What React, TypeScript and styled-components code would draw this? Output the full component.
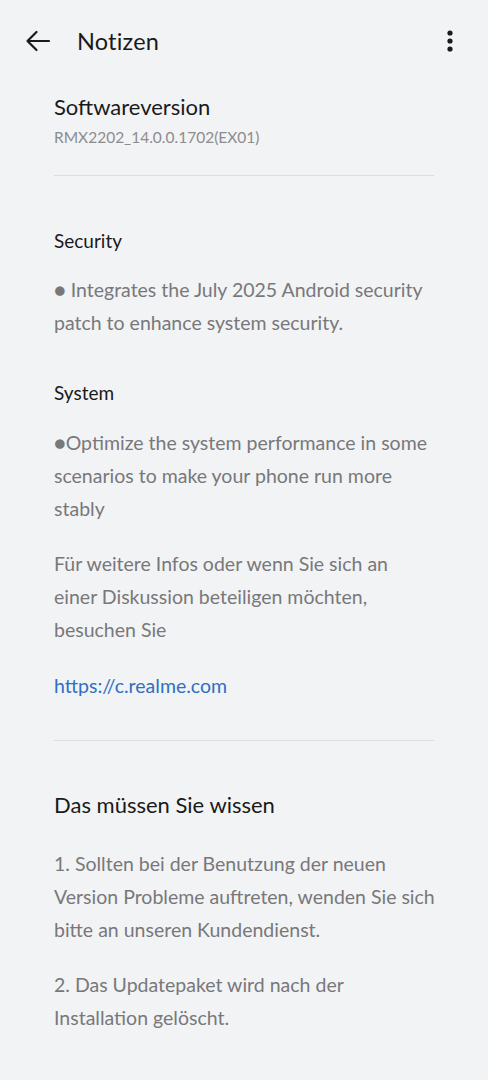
import styled, { createGlobalStyle } from "styled-components";

const GlobalStyle = createGlobalStyle`
  html, body {
    margin: 0;
    padding: 0;
    background: #f2f3f5;
  }
  body {
    font-family: "Lato", "Noto Sans", sans-serif;
    -webkit-font-smoothing: antialiased;
  }
`;

const Page = styled.div`
  width: 488px;
  min-height: 1080px;
  background: #f2f3f5;
`;

const Header = styled.header`
  height: 82px;
  display: flex;
  align-items: center;
  padding: 0 24px 0 24px;
  box-sizing: border-box;
`;

const IconButton = styled.button`
  border: none;
  background: none;
  padding: 0;
  width: 28px;
  height: 28px;
  display: flex;
  align-items: center;
  justify-content: center;
  color: #1a1a1a;
`;

const HeaderTitle = styled.h1`
  flex: 1;
  margin: 0 0 0 25px;
  font-size: 23.5px;
  font-weight: 400;
  color: #1a1a1a;
  letter-spacing: 0.2px;
`;

const Content = styled.main`
  padding: 0 54px;
`;

const VersionTitle = styled.h2`
  margin: 10px 0 0;
  font-size: 22px;
  line-height: 30px;
  font-weight: 400;
  color: #1a1a1a;
`;

const VersionCode = styled.div`
  margin-top: 4px;
  font-size: 15.5px;
  line-height: 22px;
  color: #8c8c8e;
`;

const Divider = styled.hr<{ $top: number }>`
  margin: ${(p) => p.$top}px 0 0;
  border: none;
  border-top: 1px solid #dcdde0;
`;

const SectionTitle = styled.h3<{ $top: number }>`
  margin: ${(p) => p.$top}px 0 0;
  font-size: 19px;
  line-height: 26px;
  font-weight: 400;
  color: #1a1a1a;
`;

const BigTitle = styled.h3<{ $top: number }>`
  margin: ${(p) => p.$top}px 0 0;
  font-size: 22px;
  line-height: 30px;
  font-weight: 400;
  color: #1a1a1a;
`;

const Para = styled.p<{ $top: number }>`
  margin: ${(p) => p.$top}px 0 0;
  font-size: 19.5px;
  line-height: 33px;
  color: #78787b;
  white-space: nowrap;
`;

const Link = styled.a<{ $top: number }>`
  display: block;
  margin: ${(p) => p.$top}px 0 0;
  font-size: 19.5px;
  line-height: 33px;
  color: #2f6fc4;
  text-decoration: none;
`;

const ArrowIcon = () => (
  <svg width="28" height="28" viewBox="0 0 28 28" fill="none">
    <path
      d="M25 14H3.5M12.5 5L3.5 14L12.5 23"
      stroke="#1a1a1a"
      strokeWidth="2.2"
      strokeLinecap="round"
      strokeLinejoin="round"
    />
  </svg>
);

const MoreIcon = () => (
  <svg width="8" height="26" viewBox="0 0 8 26" fill="#1a1a1a">
    <circle cx="4" cy="5" r="2.6" />
    <circle cx="4" cy="13" r="2.6" />
    <circle cx="4" cy="21" r="2.6" />
  </svg>
);

export default function App() {
  return (
    <Page>
      <GlobalStyle />
      <Header>
        <IconButton aria-label="Zurück">
          <ArrowIcon />
        </IconButton>
        <HeaderTitle>Notizen</HeaderTitle>
        <IconButton aria-label="Mehr">
          <MoreIcon />
        </IconButton>
      </Header>
      <Content>
        <VersionTitle>Softwareversion</VersionTitle>
        <VersionCode>RMX2202_14.0.0.1702(EX01)</VersionCode>
        <Divider $top={27} />

        <SectionTitle $top={52}>Security</SectionTitle>
        <Para $top={19}>
          ● Integrates the July 2025 Android security
          <br />
          patch to enhance system security.
        </Para>

        <SectionTitle $top={41}>System</SectionTitle>
        <Para $top={20}>
          ●Optimize the system performance in some
          <br />
          scenarios to make your phone run more
          <br />
          stably
        </Para>

        <Para $top={22}>
          Für weitere Infos oder wenn Sie sich an
          <br />
          einer Diskussion beteiligen möchten,
          <br />
          besuchen Sie
        </Para>
        <Link $top={23} href="#">
          https://c.realme.com
        </Link>

        <Divider $top={38} />

        <BigTitle $top={49}>Das müssen Sie wissen</BigTitle>
        <Para $top={27}>
          1. Sollten bei der Benutzung der neuen
          <br />
          Version Probleme auftreten, wenden Sie sich
          <br />
          bitte an unseren Kundendienst.
        </Para>
        <Para $top={22}>
          2. Das Updatepaket wird nach der
          <br />
          Installation gelöscht.
        </Para>
      </Content>
    </Page>
  );
}
